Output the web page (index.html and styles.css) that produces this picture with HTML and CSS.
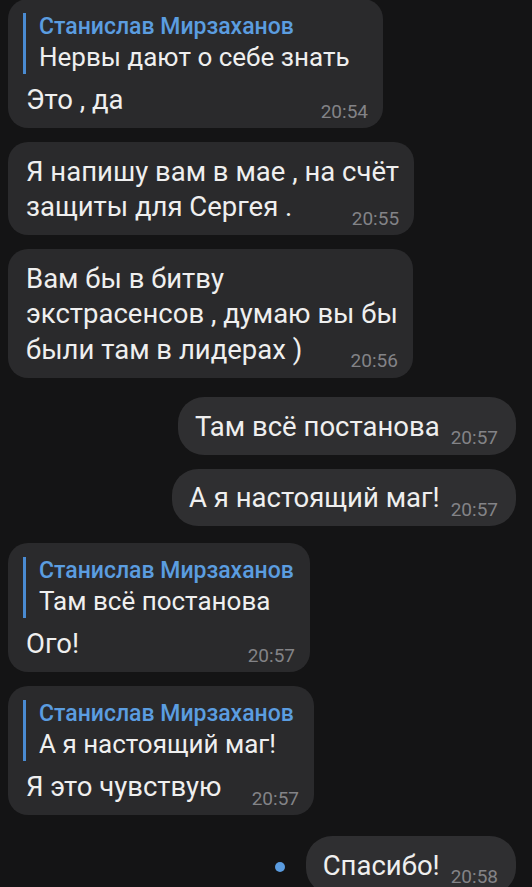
FILE: index.html
```html
<!DOCTYPE html>
<html lang="ru">
<head>
<meta charset="utf-8">
<title>Чат</title>
<link rel="stylesheet" href="styles.css">
</head>
<body>
<main class="chat">
  <div class="msg in first w-b1">
    <div class="quote">
      <div class="q-name">Станислав Мирзаханов</div>
      <div class="q-text">Нервы дают о себе знать</div>
    </div>
    <div class="row"><span class="txt">Это , да</span><span class="time">20:54</span></div>
  </div>

  <div class="msg in">
    <div class="line">Я напишу вам в мае , на счёт</div>
    <div class="row"><span class="txt">защиты для Сергея .</span><span class="time">20:55</span></div>
  </div>

  <div class="msg in">
    <div class="line">Вам бы в битву</div>
    <div class="line">экстрасенсов , думаю вы бы</div>
    <div class="row"><span class="txt">были там в лидерах )</span><span class="time">20:56</span></div>
  </div>

  <div class="msg out switch">
    <div class="row"><span class="txt">Там всё постанова</span><span class="time">20:57</span></div>
  </div>

  <div class="msg out">
    <div class="row"><span class="txt">А я настоящий маг!</span><span class="time">20:57</span></div>
  </div>

  <div class="msg in switch2 w-b6">
    <div class="quote">
      <div class="q-name">Станислав Мирзаханов</div>
      <div class="q-text">Там всё постанова</div>
    </div>
    <div class="row"><span class="txt">Ого!</span><span class="time">20:57</span></div>
  </div>

  <div class="msg in w-b7">
    <div class="quote">
      <div class="q-name">Станислав Мирзаханов</div>
      <div class="q-text">А я настоящий маг!</div>
    </div>
    <div class="row"><span class="txt">Я это чувствую</span><span class="time">20:57</span></div>
  </div>

  <div class="out-row switch3">
    <span class="dot"></span>
    <div class="msg out">
      <div class="row"><span class="txt">Спасибо!</span><span class="time">20:58</span></div>
    </div>
  </div>
</main>
</body>
</html>
```
FILE: styles.css
```css
* { box-sizing: border-box; }

html, body {
  margin: 0;
  padding: 0;
  background: #141415;
  height: 100%;
  overflow: hidden;
}

.chat {
  display: flex;
  flex-direction: column;
  gap: 14px;
  padding: 0 16px 0 8px;
  font-family: Roboto, "Noto Sans", sans-serif;
  color: #efefef;
  font-size: 27.5px;
  line-height: 35.5px;
}

.msg {
  background: #2a2a2c;
  border-radius: 20px;
  padding: 11.5px 15px 10.5px 18px;
}

.msg.in { align-self: flex-start; }

.msg.out {
  align-self: flex-end;
  background: #2f2f31;
  border-radius: 26px;
  padding: 11.5px 18px 10.5px 17px;
}

.msg.first { margin-top: -1px; }
.switch { margin-top: 5.5px; }
.switch2 { margin-top: 3px; }
.switch3 { margin-top: 7px; }

.w-b1 { width: 375px; }
.w-b6 { width: 302px; }
.w-b7 { width: 306px; }

.line { white-space: nowrap; }

.row {
  display: flex;
  justify-content: space-between;
  align-items: flex-end;
  gap: 11px;
  white-space: nowrap;
}

.time {
  font-size: 19px;
  line-height: 16px;
  color: #838387;
  margin-bottom: -2px;
}

.quote {
  border-left: 3px solid #4a8bd2;
  margin: 2px 0 8px -3px;
  padding-left: 13px;
  white-space: nowrap;
}

.q-name {
  font-size: 23px;
  font-weight: 500;
  line-height: 28px;
  color: #5b9de0;
}

.q-text {
  font-size: 26px;
  line-height: 33.5px;
}

.out-row {
  align-self: flex-end;
  display: flex;
  align-items: center;
  gap: 21px;
}

.out-row .msg.out { align-self: auto; }

.dot {
  width: 10px;
  height: 10px;
  border-radius: 50%;
  background: #5a9ce0;
  margin-top: 4px;
}
```
